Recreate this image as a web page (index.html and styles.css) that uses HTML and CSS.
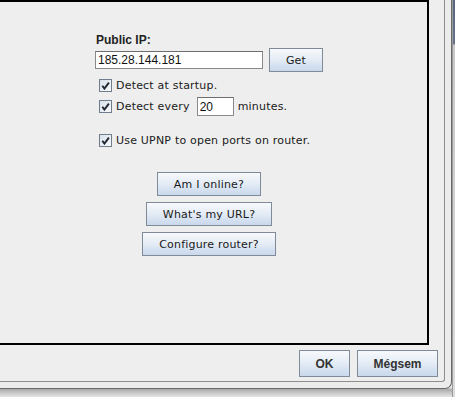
FILE: index.html
```html
<!DOCTYPE html>
<html lang="en">
<head>
    <meta charset="UTF-8">
    <title>Network settings</title>
    <link rel="stylesheet" href="styles.css">
</head>
<body>
    <div class="screen">
        <div class="window">
            <div class="client">
                <div class="panel">
                    <div class="ip-block">
                        <div class="ip-label">Public IP:</div>
                        <div class="ip-row">
                            <input class="field ip-field" type="text" value="185.28.144.181">
                            <button class="btn get-btn">Get</button>
                        </div>

                        <label class="check-row first">
                            <span class="check"><svg width="9" height="9" viewBox="0 0 9 9"><path d="M1.3 4.8 L3.4 7.6 L7.9 1.6" fill="none" stroke="#1e2733" stroke-width="1.9"/></svg></span>
                            Detect at startup.
                        </label>
                        <label class="check-row">
                            <span class="check"><svg width="9" height="9" viewBox="0 0 9 9"><path d="M1.3 4.8 L3.4 7.6 L7.9 1.6" fill="none" stroke="#1e2733" stroke-width="1.9"/></svg></span>
                            Detect every
                            <input class="field minutes-field" type="text" value="20">
                            minutes.
                        </label>
                        <label class="check-row upnp">
                            <span class="check"><svg width="9" height="9" viewBox="0 0 9 9"><path d="M1.3 4.8 L3.4 7.6 L7.9 1.6" fill="none" stroke="#1e2733" stroke-width="1.9"/></svg></span>
                            Use UPNP to open ports on router.
                        </label>

                        <div class="actions">
                            <button class="btn action-btn">Am I online?</button>
                            <button class="btn action-btn">What's my URL?</button>
                            <button class="btn action-btn">Configure router?</button>
                        </div>
                    </div>
                </div>

                <div class="footer">
                    <button class="btn dlg-btn ok-btn">OK</button>
                    <button class="btn dlg-btn cancel-btn">Mégsem</button>
                </div>
            </div>
        </div>
        <div class="backdrop"></div>
    </div>
</body>
</html>
```

FILE: styles.css
```css
* {
    margin: 0;
    padding: 0;
    box-sizing: border-box;
}

body {
    background: #f2f2f2;
    font-family: 'DejaVu Sans', Verdana, sans-serif;
    font-size: 11px;
    letter-spacing: 0.2px;
    color: #1a1a1a;
    width: 455px;
    height: 397px;
    overflow: hidden;
}

.screen {
    display: flex;
    height: 397px;
    background: linear-gradient(to bottom, #ececec 0, #ececec 388px, #a9a9a9 389px, #e6e6e6 397px);
}

.window {
    width: 452px;
    height: 389px;
    flex-shrink: 0;
    background: #ececec;
    border-right: 1px solid #6a6a6a;
    border-bottom: 1px solid #6a6a6a;
    border-bottom-right-radius: 7px;
}

.client {
    width: 445px;
    height: 382px;
    border-right: 1px solid #8e8e8e;
    border-bottom: 1px solid #8e8e8e;
    border-bottom-right-radius: 3px;
    background: #eeeeee;
}

.backdrop {
    flex: 1;
    background: linear-gradient(to bottom, #56657f 0, #66748c 44px, #c9c9c9 45px, #dcdcdc 389px);
    border-left: 1px solid #9a9a9a;
}

.panel {
    width: 429px;
    height: 345px;
    border-top: 2px solid #000;
    border-right: 2px solid #000;
    border-bottom: 2px solid #000;
    padding-left: 95px;
    padding-top: 31px;
}

.ip-block {
    width: 228px;
}

.ip-label {
    font-family: 'Liberation Sans', Arial, sans-serif;
    font-weight: bold;
    font-size: 12px;
    letter-spacing: 0;
    line-height: 15px;
    color: #222;
    padding-left: 1px;
}

.ip-row {
    display: flex;
    align-items: center;
    gap: 6px;
    height: 24px;
}

.field {
    background: #fff;
    border: 1px solid #8a8a8a;
    border-top-color: #6d6d6d;
    font-family: 'Liberation Sans', Arial, sans-serif;
    font-size: 12px;
    letter-spacing: 0;
    color: #111;
    padding: 0 2px;
    outline: none;
}

.ip-field {
    width: 168px;
    height: 18px;
}

.btn {
    font-family: 'DejaVu Sans', Verdana, sans-serif;
    font-size: 11px;
    letter-spacing: 0.2px;
    color: #1a1a1a;
    background: linear-gradient(to bottom, #f7f9fc 0%, #e6edf6 45%, #c9d8ec 100%);
    border: 1px solid #7f8b98;
    height: 24px;
    cursor: pointer;
}

.get-btn {
    width: 54px;
}

.check-row {
    display: flex;
    align-items: center;
    height: 21px;
    padding-left: 4px;
    white-space: nowrap;
}

.check-row.first {
    margin-top: 3px;
}

.check-row.upnp {
    margin-top: 13px;
}

.check {
    width: 13px;
    height: 13px;
    border: 1px solid #6f7d8c;
    background: linear-gradient(to bottom right, #d9e1ea, #f8fafc);
    display: flex;
    align-items: center;
    justify-content: center;
    margin-right: 4px;
}

.minutes-field {
    width: 37px;
    height: 19px;
    margin: 0 4px 0 7px;
}

.actions {
    display: flex;
    flex-direction: column;
    align-items: center;
    gap: 6px;
    margin-top: 21px;
}

.action-btn {
    padding: 0 16px;
}

.footer {
    display: flex;
    justify-content: flex-end;
    gap: 7px;
    padding-top: 5px;
    padding-right: 6px;
}

.dlg-btn {
    font-family: 'Liberation Sans', Arial, sans-serif;
    font-weight: bold;
    font-size: 12px;
    letter-spacing: 0;
    color: #333;
    height: 27px;
}

.ok-btn {
    width: 51px;
}

.cancel-btn {
    width: 81px;
}
```
